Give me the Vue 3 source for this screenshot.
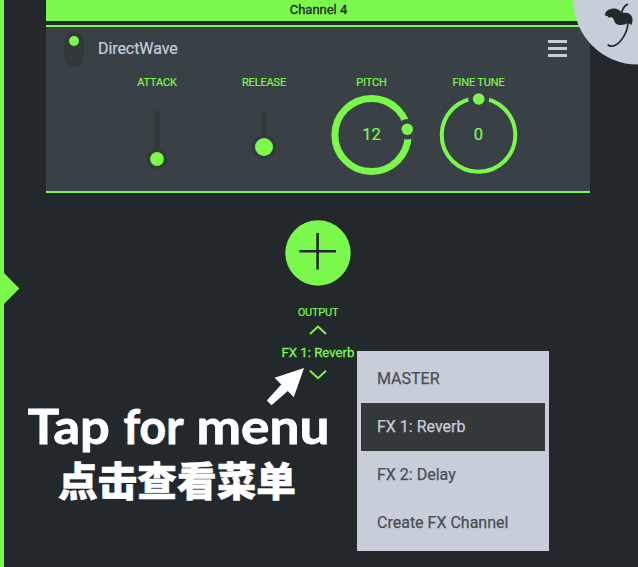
<script setup>
const sliders = [
  { name: 'ATTACK', y: 65, r: 6.9, halo: 10.4 },
  { name: 'RELEASE', y: 53, r: 9, halo: 12.3 }
]
const knobs = [
  { name: 'PITCH', value: 12, r: 36.6, stroke: 7, x: 89.3, y: 35.3, dot: 5.7, gap: 10.3 },
  { name: 'FINE TUNE', value: 0, r: 36.8, stroke: 4, x: 53.7, y: 5, dot: 5.8, gap: 10.5 }
]
const outputs = ['MASTER', 'FX 1: Reverb', 'FX 2: Delay', 'Create FX Channel']
const selected = 'FX 1: Reverb'
</script>

<template>
  <main class="screen">
    <aside class="rail">
      <svg class="rail-arrow" width="20" height="32" viewBox="0 0 20 32"><path d="M0 0H4L19.3 15.5L4 31H0Z" /></svg>
    </aside>

    <section class="channel">
      <header class="channel-title"><span>Channel 4</span></header>
      <article class="device">
        <div class="device-head">
          <span class="toggle"><i></i></span>
          <h1>DirectWave</h1>
          <span class="burger"><i></i><i></i><i></i></span>
        </div>
        <div class="controls">
          <div v-for="s in sliders" :key="s.name" class="control slider">
            <label>{{ s.name }}</label>
            <svg width="107" height="88" viewBox="0 0 107 88">
              <rect class="track" x="50" y="17" width="6" height="44" />
              <circle class="track" cx="53" :cy="s.y" :r="s.halo" />
              <circle class="dot" cx="53" :cy="s.y" :r="s.r" />
            </svg>
          </div>
          <div v-for="k in knobs" :key="k.name" class="control">
            <label>{{ k.name }}</label>
            <svg width="107" height="88" viewBox="0 0 107 88">
              <circle class="ring" cx="53.5" cy="41" :r="k.r" :stroke-width="k.stroke" />
              <circle class="cut" :cx="k.x" :cy="k.y" :r="k.gap" />
              <circle class="dot" :cx="k.x" :cy="k.y" :r="k.dot" />
              <text x="53.5" y="46.3">{{ k.value }}</text>
            </svg>
          </div>
        </div>
      </article>

      <div class="output">
        <svg class="add" width="66" height="66" viewBox="0 0 66 66">
          <circle cx="33" cy="33" r="32.7" />
          <path d="M14.3 31.3H51M32.6 13V49.6" />
        </svg>
        <span class="output-label">OUTPUT</span>
        <svg class="chev up" width="18" height="10" viewBox="0 0 18 10"><path d="M1 9L9 1.5L17 9" /></svg>
        <span class="output-value">{{ selected }}</span>
        <svg class="chev" width="18" height="10" viewBox="0 0 18 10"><path d="M1 0.7L9 8.2L17 0.7" /></svg>
      </div>
    </section>

    <svg class="badge" width="66" height="65" viewBox="572 0 66 65">
      <circle class="badge-bg" cx="638" cy="0" r="64.6" />
      <path class="fruit" d="M605.3 16C604.3 12 608.7 8.8 613.2 8.6C616.8 8.3 620.2 10 621.6 13C626 11.9 630.9 13.3 632 17C632.9 19.6 632.6 22.3 631.4 24.9C629 23.2 626.5 22.9 624.5 24.6C621.5 25.5 616.2 25.1 614.7 22.2C614.2 19.8 613.4 17.5 611.2 17.3L608.4 17.4L607.3 15.8Z" />
      <path class="stem" d="M621.3 14C622.2 9.5 623.8 6 627.4 4.4" />
      <path class="stem" d="M627.8 23C628 31 622 41.5 615.7 45.1C612.4 46.9 609.3 46.3 608.2 44.9" />
    </svg>

    <svg class="note" width="330" height="150" viewBox="10 360 330 150">
      <path d="M304 368L293.8 397.2L287.8 391L271.5 405.3L266.8 400.4L281.3 384.5L274.6 377.7Z" />
      <g class="latin">
        <text x="27.8" y="443.5" textLength="82" lengthAdjust="spacingAndGlyphs">Tap</text>
        <text x="123.5" y="443.5" textLength="60" lengthAdjust="spacingAndGlyphs">for</text>
        <text x="196.5" y="443.5" textLength="133" lengthAdjust="spacingAndGlyphs">menu</text>
      </g>
      <text class="hanzi" x="58" y="495.8" textLength="238" lengthAdjust="spacingAndGlyphs">点击查看菜单</text>
    </svg>

    <nav class="menu">
      <div v-for="o in outputs" :key="o" class="item" :class="{ active: o === selected }"><span>{{ o }}</span></div>
    </nav>
  </main>
</template>

<style>
body { margin: 0; background: #23282c; }
</style>

<style scoped>
.screen {
  position: relative;
  display: flex;
  width: 638px;
  height: 567px;
  overflow: hidden;
  background: #23282c;
  color: #7af84c;
  font-family: Roboto, sans-serif;
}
.rail { width: 4px; height: 567px; background: #7af84c; }
.rail-arrow { position: absolute; left: 0; top: 273px; fill: #7af84c; }
.channel { width: 544px; margin-left: 42px; }
.channel-title {
  height: 21px;
  box-sizing: border-box;
  padding-left: 1px;
  background: #7af84c;
  color: #23282c;
  text-align: center;
  font-size: 13px;
  letter-spacing: -0.02px;
  -webkit-text-stroke: 0.3px #23282c;
  line-height: 19px;
}
.device {
  height: 168px;
  box-sizing: border-box;
  margin-top: 4px;
  border-top: 2px solid #7af84c;
  border-bottom: 2px solid #7af84c;
  background: #3a4146;
}
.device-head { display: flex; height: 49px; padding: 4px 23px 0 18px; box-sizing: border-box; }
.toggle { width: 20px; height: 36px; border-radius: 10px; background: #33383b; }
.toggle i { display: block; width: 10px; height: 10px; margin: 5px; border-radius: 50%; background: #7af84c; }
h1 { margin: 0 0 0 14px; color: #c8cdda; font-size: 16px; font-weight: 400; letter-spacing: -0.07px; line-height: 35px; -webkit-text-stroke: 0.2px #c8cdda; }
.burger { display: flex; flex-direction: column; gap: 4px; width: 19px; margin: 9px 0 0 auto; }
.burger i { height: 3px; background: #c8cdda; }
.controls { display: grid; grid-template-columns: repeat(4, 107px); padding-left: 58px; }
.control { display: flex; flex-direction: column; align-items: center; }
label { height: 18px; font-size: 11px; letter-spacing: -0.15px; line-height: 13px; white-space: nowrap; -webkit-text-stroke: 0.2px #7af84c; }
.slider label { padding-right: 1px; }
.track { fill: #33383b; }
.dot { fill: #7af84c; }
.ring { fill: none; stroke: #7af84c; }
.cut { fill: #3a4146; }
.control svg { overflow: visible; }
.control text { fill: #7af84c; stroke: #7af84c; stroke-width: 0.2; font-size: 16.5px; text-anchor: middle; }
.output { display: flex; flex-direction: column; align-items: center; padding-top: 27px; }
.add circle { fill: #7af84c; }
.add path { stroke: #23282c; stroke-width: 2.6; }
.output-label { height: 13px; margin-top: 20px; font-size: 11px; letter-spacing: -0.25px; line-height: 13px; -webkit-text-stroke: 0.2px #7af84c; }
.output-value { height: 16px; margin: 10px 0 9px; font-size: 13.2px; line-height: 16px; -webkit-text-stroke: 0.3px #7af84c; }
.chev { fill: none; stroke: #7af84c; stroke-width: 2; }
.chev.up { margin-top: 6px; }
.badge { position: absolute; right: 0; top: 0; }
.badge-bg { fill: #c8cdda; }
.fruit { fill: #23282c; }
.stem { fill: none; stroke: #23282c; stroke-width: 1.7; stroke-linecap: round; }
.note { position: absolute; left: 10px; top: 360px; fill: #fff; }
.latin { font-family: Lato, sans-serif; font-size: 47px; font-weight: 700; stroke: #fff; stroke-width: 0.8; }
.hanzi { font-family: "Noto Sans CJK SC", sans-serif; font-size: 39.5px; font-weight: 900; stroke: #fff; stroke-width: 0.6; }
.menu {
  position: absolute;
  left: 357px;
  top: 351px;
  width: 192px;
  height: 200px;
  box-sizing: border-box;
  padding: 4px;
  background: #c8cdda;
}
.item { height: 48px; padding-left: 16px; color: #484f54; font-size: 16px; line-height: 47px; -webkit-text-stroke: 0.25px currentColor; }
.item.active { background: #33383b; color: #c8cdda; }
</style>
